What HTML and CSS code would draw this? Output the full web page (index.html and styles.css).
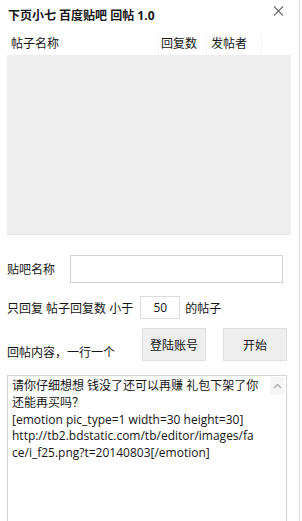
FILE: index.html
```html
<!DOCTYPE html>
<html lang="zh-CN">
<head>
    <meta charset="UTF-8">
    <meta name="viewport" content="width=device-width, initial-scale=1.0">
    <title>下页小七 百度贴吧 回帖 1.0</title>
    <link rel="stylesheet" href="styles.css">
</head>

<body>

    <div class="window">
        <div class="title-bar">
            <span class="title">下页小七 百度贴吧 回帖 1.0</span>
            <svg class="close" width="11" height="10" viewBox="0 0 11 10">
                <path d="M1 0.5 L10 9.5 M10 0.5 L1 9.5" stroke="#6a6a6a" stroke-width="1.1" fill="none"/>
            </svg>
        </div>

        <div class="list">
            <div class="list-head">
                <div class="col col-name">帖子名称</div>
                <div class="col col-reply">回复数</div>
                <div class="col col-author">发帖者</div>
                <div class="col col-rest"></div>
            </div>
            <div class="list-body"></div>
        </div>

        <div class="row row-bar">
            <span class="label-bar">贴吧名称</span>
            <div class="input input-bar"></div>
        </div>

        <div class="row row-limit">
            <span>只回复 帖子回复数 小于</span>
            <div class="input input-num">50</div>
            <span class="after-num">的帖子</span>
        </div>

        <div class="row row-actions">
            <span class="label-content">回帖内容，一行一个</span>
            <button class="btn">登陆账号</button>
            <button class="btn btn-start">开始</button>
        </div>

        <div class="content-box">
            <div class="content-text">请你仔细想想 钱没了还可以再赚 礼包下架了你
还能再买吗？
[emotion pic_type=1 width=30 height=30]
http://tb2.bdstatic.com/tb/editor/images/fa
ce/i_f25.png?t=20140803[/emotion]</div>
            <!-- стрелка полосы прокрутки -->
            <div class="scroll-up">
                <svg width="9" height="6" viewBox="0 0 9 6">
                    <path d="M1 5 L4.5 1.5 L8 5" stroke="#a8a8a8" stroke-width="1.2" fill="none"/>
                </svg>
            </div>
        </div>
    </div>

</body>
</html>
```

FILE: styles.css
```css
body {
    margin: 0;
    background: #ffffff;
}

.window {
    width: 300px;
    height: 521px;
    box-sizing: border-box;
    border-right: 1px solid #dedede;
    position: relative;
    overflow: hidden;
    font-family: "Open Sans", "Noto Sans CJK SC", sans-serif;
    font-size: 12px;
    color: #151515;
    padding-left: 7px;
}

.title-bar {
    height: 33px;
    display: flex;
    align-items: center;
    padding-left: 1px;
    padding-bottom: 3px;
    box-sizing: border-box;
}

.title {
    font-weight: bold;
}

.close {
    position: absolute;
    left: 273px;
    top: 6px;
}

.list {
    width: 284px;
}

.list-head {
    height: 22px;
    display: flex;
    background: #ffffff;
}

.col {
    line-height: 22px;
    padding-left: 4px;
    box-sizing: border-box;
    border-right: 1px solid #f5f5f5;
}

.col-name {
    width: 152px;
}

.col-reply {
    width: 48px;
    padding-left: 2px;
}

.col-author {
    width: 55px;
}

.col-rest {
    flex: 1;
    border-right: none;
}

.list-body {
    height: 180px;
    background: #eeeeee;
    border-bottom: 1px solid #e6e6e6;
    box-sizing: border-box;
}

.row {
    display: flex;
    align-items: center;
}

.row-bar {
    margin-top: 20px;
    height: 28px;
}

.label-bar {
    width: 63px;
}

.input {
    box-sizing: border-box;
    border: 1px solid #d2d2d2;
    background: #ffffff;
}

.input-bar {
    width: 213px;
    height: 28px;
}

.row-limit {
    margin-top: 13px;
    height: 23px;
}

.input-num {
    width: 40px;
    height: 23px;
    margin-left: 7px;
    border-color: #dcdcdc;
    text-align: center;
    line-height: 21px;
}

.after-num {
    margin-left: 5px;
}

.row-actions {
    margin-top: 9px;
    height: 33px;
    align-items: flex-end;
}

.label-content {
    width: 135px;
    line-height: 17px;
}

.btn {
    width: 64px;
    height: 33px;
    margin: 0;
    padding: 0;
    border: 1px solid #e0e0e0;
    background: #efefef;
    font-family: inherit;
    font-size: 12px;
    color: #151515;
}

.btn-start {
    margin-left: 17px;
}

.content-box {
    position: relative;
    margin-top: 14px;
    width: 280px;
    height: 160px;
    box-sizing: border-box;
    border: 1px solid #d4d4d4;
    padding: 2px 4px;
}

.content-text {
    white-space: pre;
    line-height: 16.75px;
}

.scroll-up {
    position: absolute;
    right: 2px;
    top: 1px;
    width: 14px;
    height: 18px;
    background: #f6f6f6;
    display: flex;
    align-items: center;
    justify-content: center;
}
```
